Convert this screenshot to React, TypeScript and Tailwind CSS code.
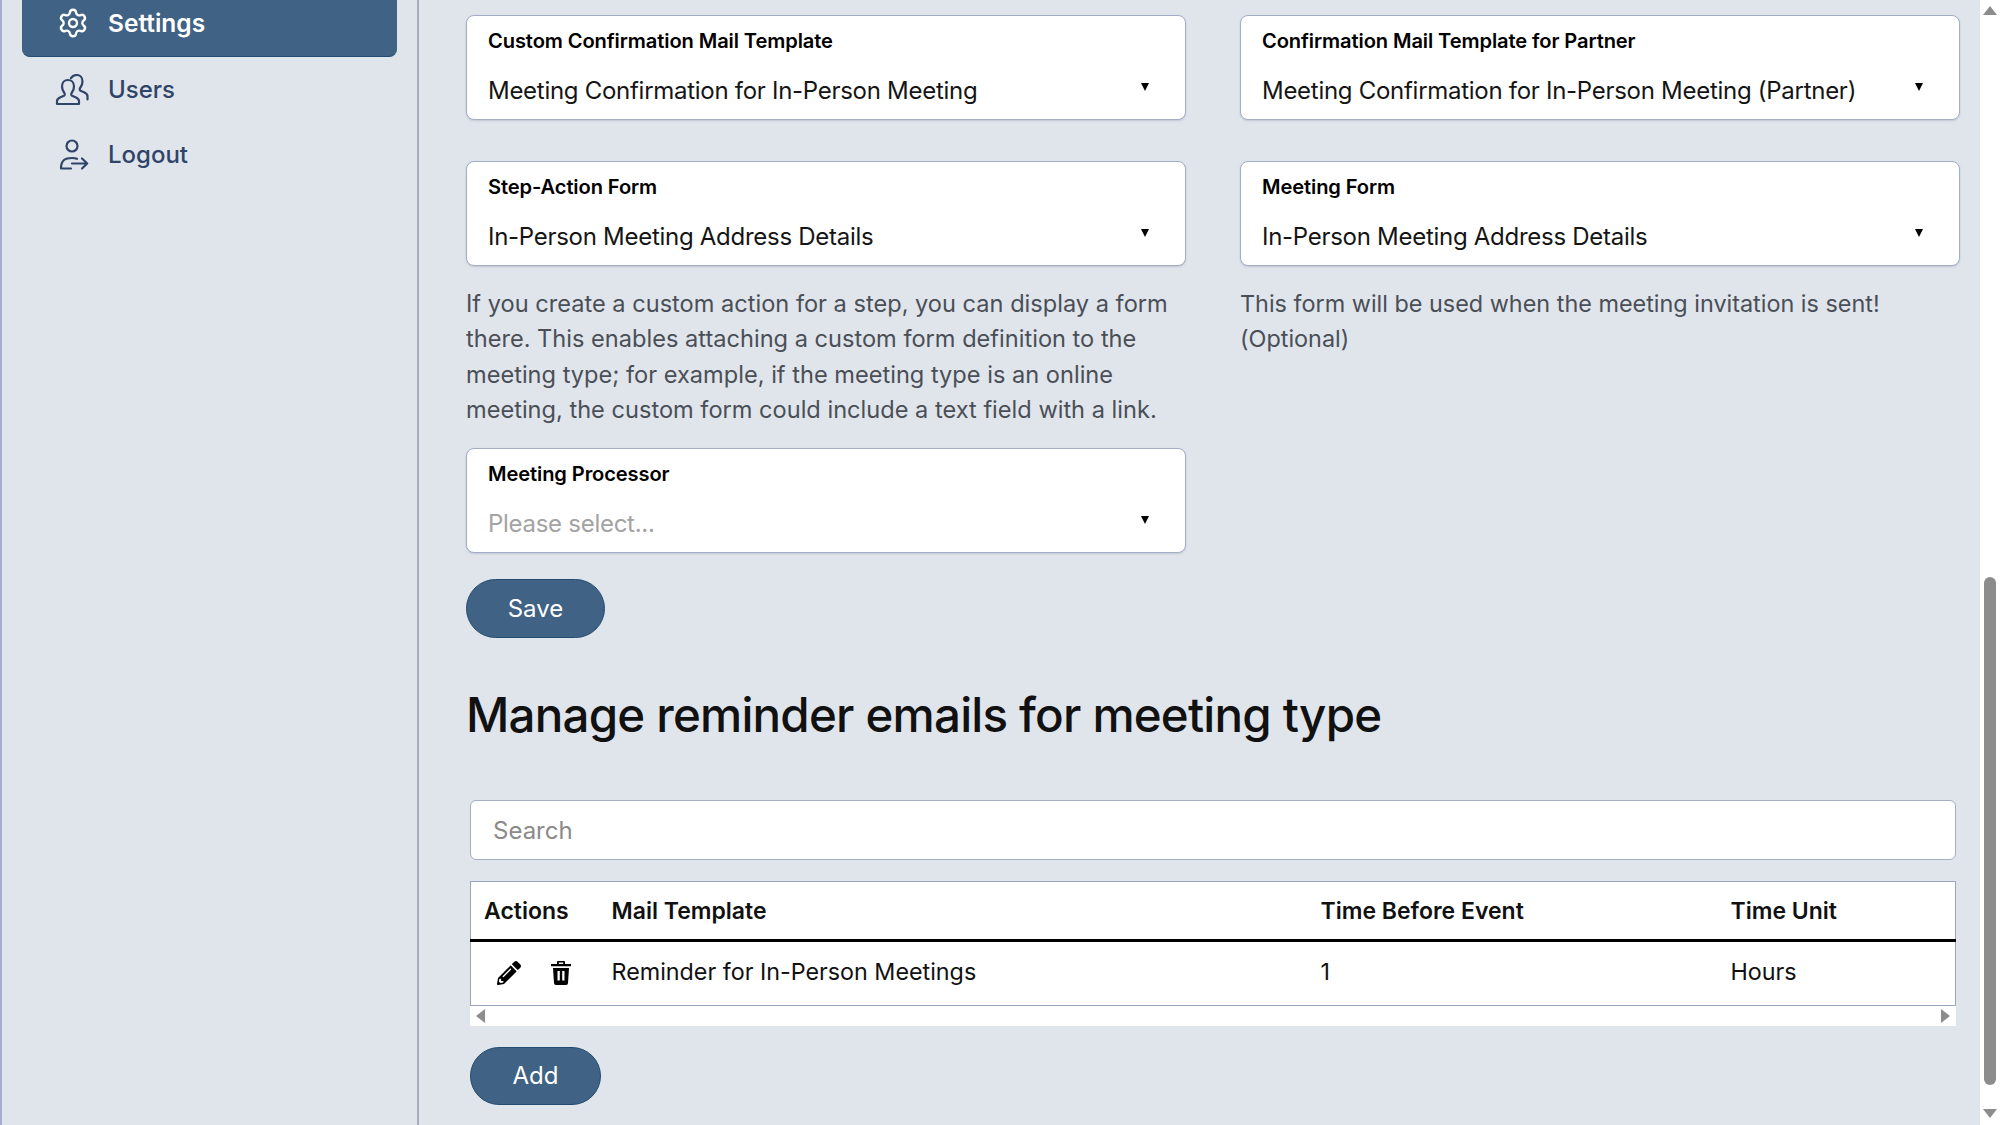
import { Settings } from "lucide-react";
import { FaPencilAlt } from "react-icons/fa";

const font = "font-['Inter','Liberation_Sans',sans-serif]";

function UsersIcon() {
  return (
    <svg width="34" height="32" viewBox="0 0 34 32" fill="none" stroke="#2f4468" strokeWidth="2.2" strokeLinecap="round" strokeLinejoin="round">
      <path d="M2 30v-3c0-2 1.500-3 4-4l3-1.200c1-.5 1-2 .2-3C7.800 17 7 15 7 12.500 7 8.500 9.500 6 13 6s6 2.500 6 6.500c0 2.500-.8 4.500-2.200 6.300-.8 1-.8 2.500.2 3l3 1.200c2.500 1 4 2 4 4v3z" />
      <path d="M16 4c1.500-2 3.500-3 5.500-3 3.500 0 6 2.500 6 6.500 0 2.500-.8 4.500-2.200 6.300-.8 1-.8 2.500.2 3l3 1.200c2.500 1 4 2 4 4v3.500" />
    </svg>
  );
}

function LogoutIcon() {
  return (
    <svg width="30" height="32" viewBox="0 0 30 32" fill="none" stroke="#2f4468" strokeWidth="2.2" strokeLinecap="round" strokeLinejoin="round">
      <circle cx="13" cy="7" r="5.500" />
      <path d="M2 29c0-3 .8-6 3-8 2-1.600 4-2 8-2 2 0 3.500.2 5 .8" />
      <path d="M2 29.500h10" />
      <path d="M13 24.500h15M23 19.500l5.200 5-5.200 5" />
    </svg>
  );
}

function TrashIcon() {
  return (
    <svg width="20" height="24" viewBox="0 0 20 24" fill="#000">
      <path d="M7 0h6a1 1 0 0 1 1 1v2h6v2.200H0V3h6V1a1 1 0 0 1 1-1zm.8 1.500V3h4.400V1.500z" />
      <path fillRule="evenodd" d="M2 7h16l-1 15a2 2 0 0 1-2 2H5a2 2 0 0 1-2-2zm4.500 3v9.500h2.300V10zm4.700 0v9.500h2.300V10z" />
    </svg>
  );
}

function SelectCard({ label, value, placeholder }: { label: string; value: string; placeholder?: boolean }) {
  return (
    <div className="relative h-[105px] rounded-lg border border-[#a3adc6] bg-white pl-[21px] pr-10 pt-[12px] shadow-[0_1px_2px_rgba(100,116,139,0.25)]">
      <div className="text-[20.100px] leading-[26px] font-semibold tracking-[-0.1px] text-black">{label}</div>
      <div className={"mt-[19px] text-[24px] leading-[36px] tracking-[-0.28px] " + (placeholder ? "text-[#a3a3a3]" : "text-[#151515]")}>
        {value}
      </div>
      <span className="absolute right-[36px] top-[67px] h-0 w-0 border-x-[4.500px] border-t-[8px] border-x-transparent border-t-black" />
    </div>
  );
}

function NavItem({ icon, label, shift }: { icon: React.ReactNode; label: string; shift?: boolean }) {
  return (
    <div className="flex h-[65px] items-center text-[24px] font-medium text-[#2f4468]">
      <span className={"flex w-[86px] justify-center " + (shift ? "pl-[18px]" : "pl-[14px]")}>{icon}</span>
      <span>{label}</span>
    </div>
  );
}

export default function App() {
  return (
    <div className={"flex h-screen overflow-hidden bg-[#e0e5eb] " + font}>
      <aside className="w-[419px] shrink-0 border-l-2 border-r-2 border-l-[#a7add0] border-r-[#a5adbd] px-[20px]">
        <div className="-mt-[10px] flex h-[67px] items-center rounded-b-lg border-b border-[#234c73] bg-[#3f6285] text-[24.500px] font-semibold text-white">
          <span className="flex w-[86px] justify-center pl-[16px]">
            <Settings size={32} strokeWidth={1.8} />
          </span>
          <span>Settings</span>
        </div>
        <div>
          <NavItem icon={<UsersIcon />} label="Users" />
          <NavItem icon={<LogoutIcon />} label="Logout" shift />
        </div>
      </aside>

      <main className="min-w-0 flex-1 pl-[47px] pr-[20px] pt-[15px]">
        <div className="grid grid-cols-2 gap-x-[54px]">
          <div className="flex flex-col">
            <SelectCard label="Custom Confirmation Mail Template" value="Meeting Confirmation for In-Person Meeting" />
            <div className="mt-[41px]">
              <SelectCard label="Step-Action Form" value="In-Person Meeting Address Details" />
            </div>
            <p className="mt-[19.500px] mb-[20.500px] text-[23.600px] leading-[35.500px] text-[#4a4f57]">
              If you create a custom action for a step, you can display a form there. This enables attaching a custom form definition to the meeting type; for example, if the meeting type is an online meeting, the custom form could include a text field with a link.
            </p>
            <SelectCard label="Meeting Processor" value="Please select..." placeholder />
          </div>
          <div className="flex flex-col">
            <SelectCard label="Confirmation Mail Template for Partner" value="Meeting Confirmation for In-Person Meeting (Partner)" />
            <div className="mt-[41px]">
              <SelectCard label="Meeting Form" value="In-Person Meeting Address Details" />
            </div>
            <p className="mt-[19.500px] text-[23.400px] leading-[35.500px] text-[#4a4f57]">
              This form will be used when the meeting invitation is sent! (Optional)
            </p>
          </div>
        </div>

        <button className="mt-[26px] block h-[59px] w-[139px] rounded-full border border-[#234c73] bg-[#3f6285] text-[24px] font-normal text-white">
          Save
        </button>

        <h2 className="mt-[47px] text-[47.500px] leading-[60px] font-medium tracking-[-0.8px] text-[#111]">
          Manage reminder emails for meeting type
        </h2>

        <div className="px-[4px]">
          <div className="mt-[55px] flex h-[60px] items-center rounded-md border border-[#a3adc6] bg-white pl-[22px] pt-[1px] text-[24px] text-[#8a8a8a]">
            Search
          </div>

          <div className="mt-[21px] bg-white">
            <table className="w-full table-fixed border border-[#9aa6bd] bg-white text-[23.300px] text-[#111]">
              <colgroup>
                <col className="w-[141px]" />
                <col className="w-[709px]" />
                <col className="w-[410px]" />
                <col />
              </colgroup>
              <thead>
                <tr className="h-[59px] border-b-[3px] border-black text-left text-[23px]">
                  <th className="pl-[13px] pt-[2px] font-semibold">Actions</th>
                  <th className="pt-[2px] font-semibold">Mail Template</th>
                  <th className="pt-[2px] font-semibold">Time Before Event</th>
                  <th className="pt-[2px] font-semibold">Time Unit</th>
                </tr>
              </thead>
              <tbody>
                <tr className="h-[65px]">
                  <td className="pb-[1px]">
                    <div className="flex items-center pl-[26px]">
                      <FaPencilAlt size={24} color="#000" />
                      <span className="ml-[30px]"><TrashIcon /></span>
                    </div>
                  </td>
                  <td className="pb-[2px]">Reminder for In-Person Meetings</td>
                  <td className="pb-[2px]">1</td>
                  <td className="pb-[2px]">Hours</td>
                </tr>
              </tbody>
            </table>
            <div className="flex h-[20px] items-center justify-between px-[6px]">
              <span className="h-0 w-0 border-y-[7px] border-r-[9px] border-y-transparent border-r-[#8c8c8c]" />
              <span className="h-0 w-0 border-y-[7px] border-l-[9px] border-y-transparent border-l-[#8c8c8c]" />
            </div>
          </div>

          <button className="mt-[21px] block h-[58px] w-[131px] rounded-full border border-[#234c73] bg-[#3f6285] text-[24px] font-normal text-white">
            Add
          </button>
        </div>
      </main>

      <div className="flex w-[20px] shrink-0 flex-col items-center bg-white pt-[6px]">
        <span className="h-0 w-0 border-x-[7px] border-b-[9px] border-x-transparent border-b-[#8c8c8c]" />
        <span className="mt-[562px] h-[508px] w-[12px] rounded-full bg-[#8c8c8c]" />
        <span className="mt-[24px] h-0 w-0 border-x-[7px] border-t-[9px] border-x-transparent border-t-[#8c8c8c]" />
      </div>
    </div>
  );
}
